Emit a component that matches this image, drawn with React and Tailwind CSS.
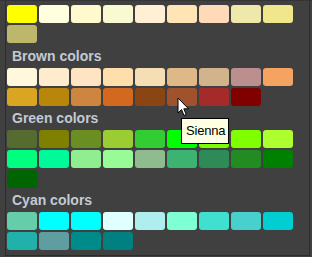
import React from 'react'

const sections = [
  {
    title: null,
    colors: ['#ffff00', '#ffffe0', '#fffacd', '#fafad2', '#ffefd5', '#ffe4b5', '#ffdab9', '#eee8aa', '#f0e68c', '#bdb76b'],
  },
  {
    title: 'Brown colors',
    colors: ['#fff8dc', '#ffebcd', '#ffe4c4', '#ffdead', '#f5deb3', '#deb887', '#d2b48c', '#bc8f8f', '#f4a460', '#daa520', '#b8860b', '#cd853f', '#d2691e', '#8b4513', '#a0522d', '#a52a2a', '#800000'],
  },
  {
    title: 'Green colors',
    colors: ['#556b2f', '#808000', '#6b8e23', '#9acd32', '#32cd32', '#00ff00', '#7cfc00', '#7fff00', '#adff2f', '#00ff7f', '#00fa9a', '#90ee90', '#98fb98', '#8fbc8f', '#3cb371', '#2e8b57', '#228b22', '#008000', '#006400'],
  },
  {
    title: 'Cyan colors',
    colors: ['#66cdaa', '#00ffff', '#00ffff', '#e0ffff', '#afeeee', '#7fffd4', '#40e0d0', '#48d1cc', '#00ced1', '#20b2aa', '#5f9ea0', '#008b8b', '#008080'],
  },
]

function Swatch({ color }) {
  return <div className="w-[30px] h-[18px] rounded-[3px]" style={{ backgroundColor: color }} />
}

export default function App() {
  return (
    <div className="relative w-[312px] h-[257px] bg-[#404040] border-t border-[#343434] overflow-hidden font-['Liberation_Sans',Arial,sans-serif]">
      <div className="ml-[5px] w-[305px] h-[255px] border-l border-r border-b border-[#2c2c2c] pl-px pt-[4px]">
        {sections.map((s, i) => (
          <div key={i}>
            {s.title && (
              <div className={`${i === 1 ? 'pt-[5px]' : 'pt-[4px]'} pb-[4px] pl-[5px]`}>
                <div className="h-4 leading-4 text-[14px] font-bold text-[#c2cad4]">{s.title}</div>
              </div>
            )}
            <div className="flex flex-wrap gap-[2px] w-[286px]">
              {s.colors.map((c, j) => (
                <Swatch key={j} color={c} />
              ))}
            </div>
          </div>
        ))}
      </div>

      <svg className="absolute left-[177px] top-[96px]" width="13" height="20" viewBox="0 0 13 20">
        <path d="M1 1 L1 16 L4.5 12.5 L7 18.5 L9.2 17.5 L6.8 11.8 L11.5 11.8 Z" fill="#fff" stroke="#000" strokeWidth="1" strokeLinejoin="round" />
      </svg>

      <div className="absolute left-[181px] top-[117px] w-[48px] h-[26px] bg-[#ffffe1] border border-black flex items-center pl-[4px]">
        <span className="text-[13px] leading-4 tracking-[-0.2px] text-black">Sienna</span>
      </div>
    </div>
  )
}
